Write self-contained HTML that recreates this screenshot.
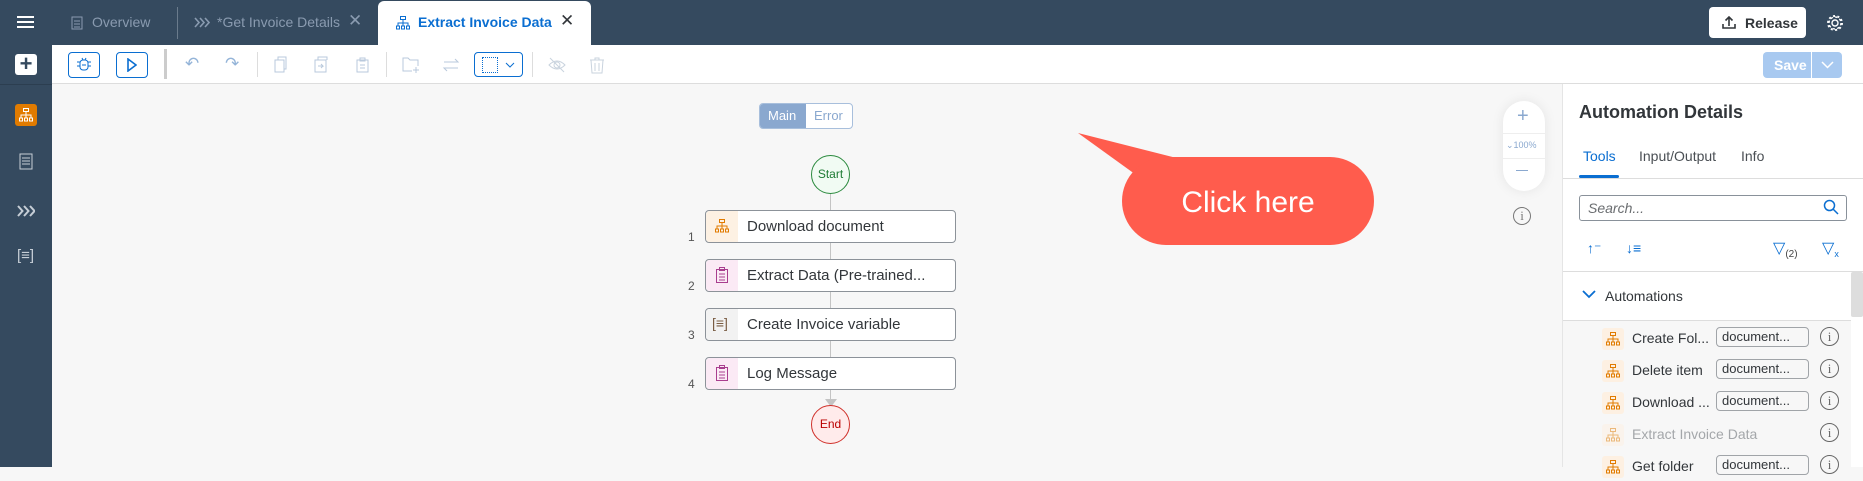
<!DOCTYPE html>
<html><head><meta charset="utf-8"><style>
*{box-sizing:border-box;margin:0;padding:0}
body{width:1863px;height:467px;overflow:hidden;font-family:"Liberation Sans",sans-serif;background:#f7f7f7;position:relative}
.abs{position:absolute}
.hdr{left:0;top:0;width:1863px;height:45px;background:#354a5f}
.side{left:0;top:45px;width:52px;height:422px;background:#354a5f}
.tb{left:52px;top:45px;width:1811px;height:39px;background:#fff;border-bottom:1px solid #ddd}
.panel{left:1562px;top:84px;width:301px;height:383px;background:#fff;border-left:1px solid #e5e5e5}
.node{left:705px;width:251px;height:33px;background:#fff;border:1px solid #8c9299;border-radius:4px;font-size:15px;color:#32363a}
.node .ic{position:absolute;left:0;top:0;width:32px;height:31px;border-radius:4px 0 0 4px}
.node span{position:absolute;left:41px;top:7px}
.num{left:688px;font-size:12px;color:#555}
.item{left:1578px;width:270px;height:28px;font-size:14px;color:#32363a}
.item .ic{position:absolute;left:24px;top:3px;width:22px;height:22px;background:#fdf0e2;border-radius:3px}
.item .ic svg{position:absolute;left:4px;top:4px}
.item .t{position:absolute;left:54px;top:5px}
.item .b{position:absolute;left:138px;top:2px;width:93px;height:20px;border:1px solid #a0a4a8;border-radius:4px;font-size:13px;padding:1px 5px;color:#32363a}
.item .i{position:absolute;left:242px;top:2px;width:19px;height:19px;border:1px solid #666;border-radius:50%;font:13px "Liberation Serif",serif;text-align:center;line-height:17px;color:#666}
</style></head><body>
<svg width="0" height="0" style="position:absolute"><defs><g id="org"><rect x="4.5" y="0.5" width="5" height="3"/><rect x="0.5" y="10" width="3" height="3"/><rect x="5.5" y="10" width="3" height="3"/><rect x="10.5" y="10" width="3" height="3"/><path d="M7 3.5v6.5M2 10V7h10v3"/></g></defs></svg>
<div class="abs hdr"></div>
<div class="abs side"></div>
<div class="abs" style="left:17px;top:16px;width:17px;height:2px;background:#fff;box-shadow:0 5px 0 #fff,0 10px 0 #fff"></div>
<svg class="abs" style="left:71px;top:15px" width="12" height="15"><rect x="1" y="2" width="10" height="12" fill="none" stroke="#8a9bb0"/><path d="M3 6h6M3 9h6M3 12h6" stroke="#8a9bb0"/></svg>
<div class="abs" style="left:92px;top:14px;font-size:14px;color:#8a9bb0">Overview</div>
<div class="abs" style="left:177px;top:7px;width:1px;height:32px;background:#6a7b8c"></div>
<svg class="abs" style="left:194px;top:17px" width="16" height="11"><path d="M1 1l4 4.5-4 4.5M6 1l4 4.5-4 4.5M11 1l4 4.5-4 4.5" fill="none" stroke="#8a9bb0" stroke-width="1.6"/></svg>
<div class="abs" style="left:217px;top:14px;font-size:14px;color:#8a9bb0">*Get Invoice Details</div>
<div class="abs" style="left:348px;top:11px;font-size:17px;color:#8a9bb0">✕</div>
<div class="abs" style="left:378px;top:1px;width:213px;height:44px;background:#fff;border-radius:6px 6px 0 0"></div>
<svg class="abs" style="left:396px;top:16px" width="14" height="14"><use href="#org" fill="none" stroke="#0a6ed1"/></svg>
<div class="abs" style="left:418px;top:14px;font-size:14px;font-weight:bold;color:#0a6ed1">Extract Invoice Data</div>
<div class="abs" style="left:560px;top:11px;font-size:17px;color:#32363a">✕</div>
<div class="abs" style="left:1709px;top:7px;width:97px;height:31px;background:#fff;border-radius:4px;font-size:14px;font-weight:bold;color:#32363a;padding:8px 0 0 36px">Release</div>
<svg class="abs" style="left:1722px;top:16px" width="14" height="13"><path d="M7 10V1M3.5 4.5L7 1l3.5 3.5M1 8v4h12V8" fill="none" stroke="#32363a" stroke-width="1.6"/></svg>
<svg class="abs" style="left:1826px;top:14px" width="18" height="18"><circle cx="9" cy="9" r="3" fill="none" stroke="#fff" stroke-width="1.4"/><circle cx="9" cy="9" r="6" fill="none" stroke="#fff" stroke-width="1.4" stroke-dasharray="2.4 2.3"/><circle cx="9" cy="9" r="7" fill="none" stroke="#fff" stroke-width="2" stroke-dasharray="2 2.4"/></svg>
<!-- side -->
<div class="abs" style="left:15px;top:54px;width:22px;height:21px;background:#fff;border-radius:3px;color:#354a5f;font-size:22px;line-height:20px;text-align:center;font-weight:bold">+</div>
<div class="abs" style="left:0;top:84px;width:52px;height:1px;background:#2c3e50"></div>
<div class="abs" style="left:15px;top:104px;width:22px;height:22px;background:#e17b00;border-radius:3px"></div>
<svg class="abs" style="left:19px;top:108px" width="14" height="14"><use href="#org" fill="none" stroke="#fff"/></svg>
<svg class="abs" style="left:19px;top:153px" width="14" height="17"><rect x="1" y="1" width="12" height="15" fill="none" stroke="#c6ced6"/><path d="M3 5h8M3 8h8M3 11h8" stroke="#c6ced6"/></svg>
<svg class="abs" style="left:17px;top:205px" width="18" height="12"><path d="M1 1l4.5 5-4.5 5M7 1l4.5 5-4.5 5M13 1l4.5 5-4.5 5" fill="none" stroke="#c6ced6" stroke-width="2"/></svg>
<div class="abs" style="left:17px;top:247px;font-size:15px;color:#c6ced6">[≡]</div>
<!-- toolbar -->
<div class="abs tb"></div>
<div class="abs" style="left:68px;top:52px;width:32px;height:26px;border:1px solid #0a6ed1;border-radius:4px"></div>
<svg class="abs" style="left:76px;top:57px" width="16" height="15"><rect x="4" y="3" width="8" height="10" rx="3" fill="none" stroke="#0a6ed1"/><path d="M1 5h3M12 5h3M1 9h3M12 9h3M6 1l1 2M10 1l-1 2M6 8h4" stroke="#0a6ed1"/></svg>
<div class="abs" style="left:116px;top:52px;width:32px;height:26px;border:1px solid #0a6ed1;border-radius:4px"></div>
<svg class="abs" style="left:127px;top:58px" width="10" height="14"><path d="M1 1l8 6-8 6z" fill="none" stroke="#0a6ed1" stroke-width="1.6"/></svg>
<div class="abs" style="left:164px;top:49px;width:3px;height:30px;background:#ccc"></div>
<div class="abs" style="left:185px;top:54px;font-size:17px;color:#94b4d8">↶</div>
<div class="abs" style="left:225px;top:54px;font-size:17px;color:#94b4d8">↷</div>
<div class="abs" style="left:257px;top:52px;width:1px;height:25px;background:#ddd"></div>
<svg class="abs" style="left:274px;top:56px" width="130" height="18"><g fill="none" stroke="#b9c9dc"><rect x="1" y="4" width="9" height="12"/><path d="M4 4V1h8v12h-2"/><rect x="41" y="4" width="11" height="12"/><path d="M44 4V1h9v3M44 10h5l-2-2M49 10l-2 2"/><rect x="83" y="4" width="11" height="12"/><rect x="86" y="2" width="5" height="3"/><path d="M86 9h5M86 12h5"/></g></svg>
<div class="abs" style="left:386px;top:52px;width:1px;height:25px;background:#ddd"></div>
<svg class="abs" style="left:402px;top:56px" width="60" height="18"><g fill="none" stroke="#b9c9dc"><path d="M10 15H1V2h5l2 2h8v6M14 11v6M11 14h6"/><path d="M42 6h14l-3-3M56 12H42l3 3"/></g></svg>
<div class="abs" style="left:474px;top:52px;width:49px;height:25px;border:1px solid #0a6ed1;border-radius:4px"></div>
<div class="abs" style="left:482px;top:57px;width:16px;height:16px;border:1px dotted #0a6ed1"></div>
<svg class="abs" style="left:505px;top:62px" width="10" height="6"><path d="M1 1l4 4 4-4" fill="none" stroke="#0a6ed1"/></svg>
<div class="abs" style="left:532px;top:52px;width:1px;height:25px;background:#ddd"></div>
<svg class="abs" style="left:548px;top:56px" width="60" height="18"><g fill="none" stroke="#c9d3de"><path d="M1 9q8-8 16 0q-8 8-16 0zM2 2l14 14"/><circle cx="9" cy="9" r="3"/><path d="M42 4h14M47 4V2h4v2M43 4l1 13h10l1-13M47 7v8M51 7v8"/></g></svg>
<div class="abs" style="left:1763px;top:52px;width:79px;height:26px;background:#a8c9f0;border-radius:4px"></div>
<div class="abs" style="left:1811px;top:52px;width:1px;height:26px;background:#fff"></div>
<div class="abs" style="left:1774px;top:57px;font-size:14px;font-weight:bold;color:#fff">Save</div>
<svg class="abs" style="left:1821px;top:61px" width="13" height="8"><path d="M1 1l5.5 5.5L12 1" fill="none" stroke="#fff" stroke-width="1.5"/></svg>
<!-- canvas -->
<div class="abs" style="left:759px;top:103px;width:94px;height:26px;border:1px solid #a8bfdc;border-radius:4px;background:#fff;overflow:hidden">
<div class="abs" style="left:0;top:0;width:46px;height:24px;background:#8aa8cf"></div>
<div class="abs" style="left:8px;top:4px;font-size:13px;color:#fff">Main</div>
<div class="abs" style="left:54px;top:4px;font-size:13px;color:#8aa8cf">Error</div></div>
<div class="abs" style="left:830px;top:192px;width:1px;height:220px;background:#c4c4c4"></div>
<div class="abs" style="left:811px;top:155px;width:39px;height:39px;border:1px solid #2b8a3e;border-radius:50%;background:#f1fbf3;font-size:12px;color:#1e7b34;text-align:center;line-height:37px">Start</div>
<div class="abs" style="left:825px;top:399px;width:0;height:0;border-left:6px solid transparent;border-right:6px solid transparent;border-top:8px solid #c4c4c4"></div>
<div class="abs" style="left:811px;top:405px;width:39px;height:39px;border:1px solid #d0302a;border-radius:50%;background:#ffebeb;font-size:12px;color:#bb0000;text-align:center;line-height:37px">End</div>
<div class="abs node" style="top:210px"><div class="ic" style="background:#fdf1e3"></div>
<svg class="abs" style="left:9px;top:8px" width="14" height="14"><use href="#org" fill="none" stroke="#e17b00"/></svg><span>Download document</span></div>
<div class="abs node" style="top:259px"><div class="ic" style="background:#fbeaf5"></div>
<svg class="abs" style="left:10px;top:7px" width="12" height="16"><g fill="none" stroke="#a93e8f"><rect x="0.5" y="2.5" width="11" height="13"/><rect x="3.5" y="0.5" width="5" height="3"/><path d="M3 7h6M3 10h6M3 13h6"/></g></svg><span>Extract Data (Pre-trained...</span></div>
<div class="abs node" style="top:308px"><div class="ic" style="background:#f2f2f2"></div>
<div class="abs" style="left:6px;top:6px;font-size:14px;color:#7a5d44">[≡]</div><span>Create Invoice variable</span></div>
<div class="abs node" style="top:357px"><div class="ic" style="background:#fbeaf5"></div>
<svg class="abs" style="left:10px;top:7px" width="12" height="16"><g fill="none" stroke="#a93e8f"><rect x="0.5" y="2.5" width="11" height="13"/><rect x="3.5" y="0.5" width="5" height="3"/><path d="M3 7h6M3 10h6M3 13h6"/></g></svg><span>Log Message</span></div>
<div class="abs num" style="top:230px">1</div><div class="abs num" style="top:279px">2</div><div class="abs num" style="top:328px">3</div><div class="abs num" style="top:377px">4</div>
<!-- callout -->
<svg class="abs" style="left:1070px;top:125px" width="320" height="130"><path d="M8 8L150 44L80 60Z" fill="#ff5c4d"/><rect x="52" y="32" width="252" height="88" rx="44" fill="#ff5c4d"/><text x="178" y="87" font-family="Liberation Sans" font-size="30" fill="#fff" text-anchor="middle">Click here</text></svg>
<!-- zoom ctrl -->
<div class="abs" style="left:1503px;top:101px;width:42px;height:90px;background:#fff;border-radius:21px;box-shadow:0 0 12px rgba(0,0,0,.08)"></div>
<div class="abs" style="left:1503px;top:133px;width:42px;height:1px;background:#eee"></div>
<div class="abs" style="left:1503px;top:158px;width:42px;height:1px;background:#eee"></div>
<div class="abs" style="left:1517px;top:105px;font-size:20px;color:#8aa8cf">+</div>
<div class="abs" style="left:1506px;top:140px;font-size:9px;color:#8aa8cf">⌄100%</div>
<div class="abs" style="left:1516px;top:170px;width:12px;height:1px;background:#8aa8cf"></div>
<div class="abs" style="left:1513px;top:207px;width:18px;height:18px;border:1px solid #777;border-radius:50%;font:13px 'Liberation Serif',serif;color:#777;text-align:center;line-height:16px">i</div>
<!-- panel -->
<div class="abs panel"></div>
<div class="abs" style="left:1579px;top:102px;font-size:18px;font-weight:bold;color:#32363a">Automation Details</div>
<div class="abs" style="left:1583px;top:148px;font-size:14px;color:#0a6ed1">Tools</div>
<div class="abs" style="left:1639px;top:148px;font-size:14px;color:#4a4f54">Input/Output</div>
<div class="abs" style="left:1741px;top:148px;font-size:14px;color:#4a4f54">Info</div>
<div class="abs" style="left:1579px;top:175px;width:40px;height:3px;background:#0a6ed1;border-radius:2px"></div>
<div class="abs" style="left:1563px;top:178px;width:300px;height:1px;background:#ddd"></div>
<div class="abs" style="left:1579px;top:195px;width:268px;height:26px;border:1px solid #89919a;border-radius:3px"></div>
<div class="abs" style="left:1588px;top:200px;font-size:14px;font-style:italic;color:#6a6d70">Search...</div>
<svg class="abs" style="left:1823px;top:199px" width="16" height="16"><circle cx="6.5" cy="6.5" r="5" fill="none" stroke="#0a6ed1" stroke-width="1.5"/><path d="M10 10l5 5" stroke="#0a6ed1" stroke-width="1.5"/></svg>
<div class="abs" style="left:1587px;top:240px;font-size:14px;color:#0a6ed1">↑⁻</div>
<div class="abs" style="left:1626px;top:240px;font-size:14px;color:#0a6ed1">↓≡</div>
<div class="abs" style="left:1773px;top:238px;font-size:16px;color:#0a6ed1">▽<sub style="font-size:10px;color:#444">(2)</sub></div>
<div class="abs" style="left:1822px;top:238px;font-size:16px;color:#0a6ed1">▽<sub style="font-size:9px">x</sub></div>
<div class="abs" style="left:1563px;top:271px;width:300px;height:1px;background:#ddd"></div>
<div class="abs" style="left:1563px;top:320px;width:288px;height:147px;background:#f7f7f7"></div>
<div class="abs" style="left:1563px;top:320px;width:288px;height:1px;background:#ddd"></div>
<svg class="abs" style="left:1582px;top:290px" width="14" height="9"><path d="M1 1l6 6 6-6" fill="none" stroke="#0a6ed1" stroke-width="1.8"/></svg>
<div class="abs" style="left:1605px;top:288px;font-size:14px;color:#32363a">Automations</div>
<div class="abs" style="left:1851px;top:272px;width:12px;height:45px;background:#ddd;border-radius:2px"></div>
<div class="abs item" style="top:325px"><div class="ic"><svg width="14" height="14"><use href="#org" fill="none" stroke="#e17b00"/></svg></div><div class="t">Create Fol...</div><div class="b">document...</div><div class="i">i</div></div>
<div class="abs item" style="top:357px"><div class="ic"><svg width="14" height="14"><use href="#org" fill="none" stroke="#e17b00"/></svg></div><div class="t">Delete item</div><div class="b">document...</div><div class="i">i</div></div>
<div class="abs item" style="top:389px"><div class="ic"><svg width="14" height="14"><use href="#org" fill="none" stroke="#e17b00"/></svg></div><div class="t">Download ...</div><div class="b">document...</div><div class="i">i</div></div>
<div class="abs item" style="top:421px"><div class="ic" style="opacity:.5"><svg width="14" height="14"><use href="#org" fill="none" stroke="#e17b00"/></svg></div><div class="t" style="color:#a4a7aa">Extract Invoice Data</div><div class="i">i</div></div>
<div class="abs item" style="top:453px"><div class="ic"><svg width="14" height="14"><use href="#org" fill="none" stroke="#e17b00"/></svg></div><div class="t">Get folder</div><div class="b">document...</div><div class="i">i</div></div>
</body></html>
